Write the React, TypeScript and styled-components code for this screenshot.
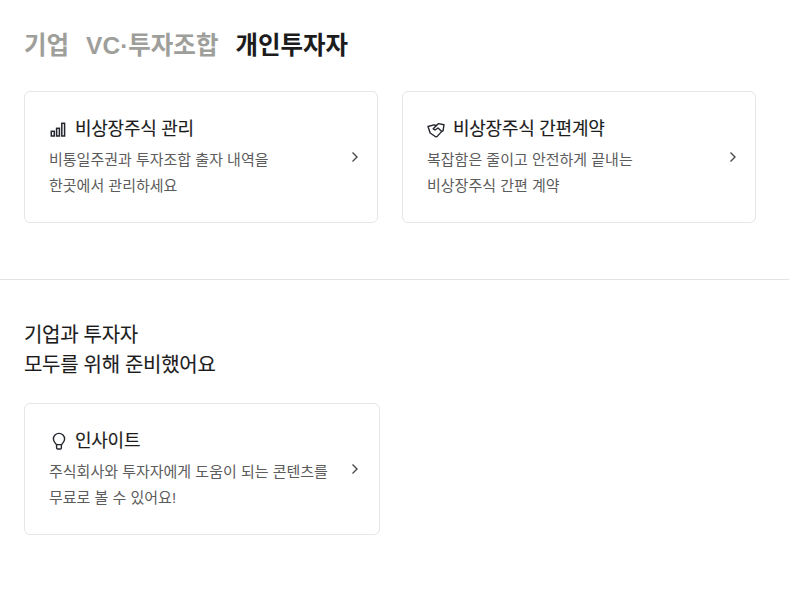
import { createGlobalStyle } from "styled-components";
import styled from "styled-components";

const GlobalStyle = createGlobalStyle`
	* {
		box-sizing: border-box;
	}
	body {
		margin: 0;
		background: #fff;
		font-family: "Liberation Sans", "Noto Sans CJK KR", sans-serif;
		color: #1c1c1c;
	}
`;

const Page = styled.div`
	width: 789px;
	height: 594px;
	overflow: hidden;
`;

const TopSection = styled.section`
	padding: 20px 33px 56px 24px;
	border-bottom: 1px solid #e2e2e2;
`;

const Tabs = styled.div`
	display: flex;
	column-gap: 17px;
	height: 46px;
	align-items: center;
	margin-bottom: 25px;
`;

const Tab = styled.span<{ $active?: boolean }>`
	font-size: 24.5px;
	font-weight: 700;
	color: ${({ $active }) => ($active ? "#1c1c1c" : "#9e9e9a")};
`;

const CardRow = styled.div`
	display: grid;
	grid-template-columns: 354px 354px;
	column-gap: 24px;
`;

const Card = styled.a<{ $wide?: boolean }>`
	display: grid;
	grid-template-columns: 298px 16px;
	align-items: center;
	width: ${({ $wide }) => ($wide ? "356px" : "354px")};
	height: 132px;
	padding-left: 24px;
	background: #fff;
	border: 1px solid #e6e6e6;
	border-radius: 6px;
`;

const CardBody = styled.div`
	display: flex;
	flex-direction: column;
	row-gap: 7px;
	margin-bottom: 2px;
`;

const CardTitle = styled.div`
	display: flex;
	align-items: center;
	column-gap: 8px;
	height: 26px;
	font-size: 18px;
	font-weight: 400;
	letter-spacing: -0.25px;
	color: #1c1c1c;
	-webkit-text-stroke: 0.15px #1c1c1c;
`;

const IconSlot = styled.span`
	display: flex;
	align-items: center;
	justify-content: center;
	width: 18px;
	height: 18px;
	margin-top: 5px;
`;

const CardText = styled.p`
	margin: 0;
	font-size: 15px;
	line-height: 26px;
	color: #5c5c5c;
`;

const BottomSection = styled.section`
	padding: 40px 24px 0;
`;

const Heading = styled.h2`
	margin: 0 0 23px;
	font-size: 20px;
	font-weight: 400;
	letter-spacing: -0.3px;
	line-height: 30px;
	color: #1c1c1c;
	-webkit-text-stroke: 0.1px #1c1c1c;
`;

const ChartIcon = () => (
	<svg width="18" height="18" viewBox="0 0 18 18" fill="none" stroke="#23272d" strokeWidth="1.5">
		<rect x="2.3" y="11.3" width="3" height="4.7" />
		<rect x="7.6" y="8.3" width="2.8" height="7.7" />
		<rect x="12.8" y="3.3" width="2.8" height="12.7" />
	</svg>
);

const HandshakeIcon = () => (
	<svg width="18" height="18" viewBox="0 0 18 18" fill="none" stroke="#23272d" strokeWidth="1.4" strokeLinejoin="round" strokeLinecap="round">
		<path d="M1 6.5 L7 4.8 L9.5 5.5 L11.5 3.6 L17 4.8 L16 10.8 L14.8 11.4 L10 16.6 L8.6 16.8 L3.2 13 Z" />
		<path d="M9.5 5.5 L6.2 8.8 L8 10 L11 8 L14.8 11.4" />
	</svg>
);

const BulbIcon = () => (
	<svg width="18" height="18" viewBox="0 0 18 18" fill="none" stroke="#23272d" strokeWidth="1.4" strokeLinejoin="round" strokeLinecap="round">
		<path d="M7.4 12.6 C6.6 11 4.4 9.8 4.4 7 A5.6 5.6 0 0 1 15.6 7 C15.6 9.8 13.4 11 12.6 12.6 Z" />
		<path d="M7.6 12.6 V15.8 C7.6 16.6 8.1 17 8.8 17 H11.2 C11.9 17 12.4 16.6 12.4 15.8 V12.6" />
	</svg>
);

const Chevron = () => (
	<svg width="16" height="16" viewBox="0 0 16 16" fill="none" stroke="#4a4a4a" strokeWidth="1.4">
		<path d="M5.5 3.5 L10 8 L5.5 12.5" />
	</svg>
);

interface InfoCardProps {
	icon: React.ReactNode;
	title: string;
	lines: string[];
	wide?: boolean;
}

const InfoCard: React.FC<InfoCardProps> = ({ icon, title, lines, wide }) => (
	<Card $wide={wide}>
		<CardBody>
			<CardTitle>
				<IconSlot>{icon}</IconSlot>
				{title}
			</CardTitle>
			<CardText>
				{lines[0]}
				<br />
				{lines[1]}
			</CardText>
		</CardBody>
		<Chevron />
	</Card>
);

const App = () => (
	<Page>
		<GlobalStyle />
		<TopSection>
			<Tabs>
				<Tab>기업</Tab>
				<Tab>VC·투자조합</Tab>
				<Tab $active>개인투자자</Tab>
			</Tabs>
			<CardRow>
				<InfoCard
					icon={<ChartIcon />}
					title="비상장주식 관리"
					lines={["비통일주권과 투자조합 출자 내역을", "한곳에서 관리하세요"]}
				/>
				<InfoCard
					icon={<HandshakeIcon />}
					title="비상장주식 간편계약"
					lines={["복잡함은 줄이고 안전하게 끝내는", "비상장주식 간편 계약"]}
				/>
			</CardRow>
		</TopSection>
		<BottomSection>
			<Heading>
				기업과 투자자
				<br />
				모두를 위해 준비했어요
			</Heading>
			<InfoCard
				wide
				icon={<BulbIcon />}
				title="인사이트"
				lines={["주식회사와 투자자에게 도움이 되는 콘텐츠를", "무료로 볼 수 있어요!"]}
			/>
		</BottomSection>
	</Page>
);

export default App;
